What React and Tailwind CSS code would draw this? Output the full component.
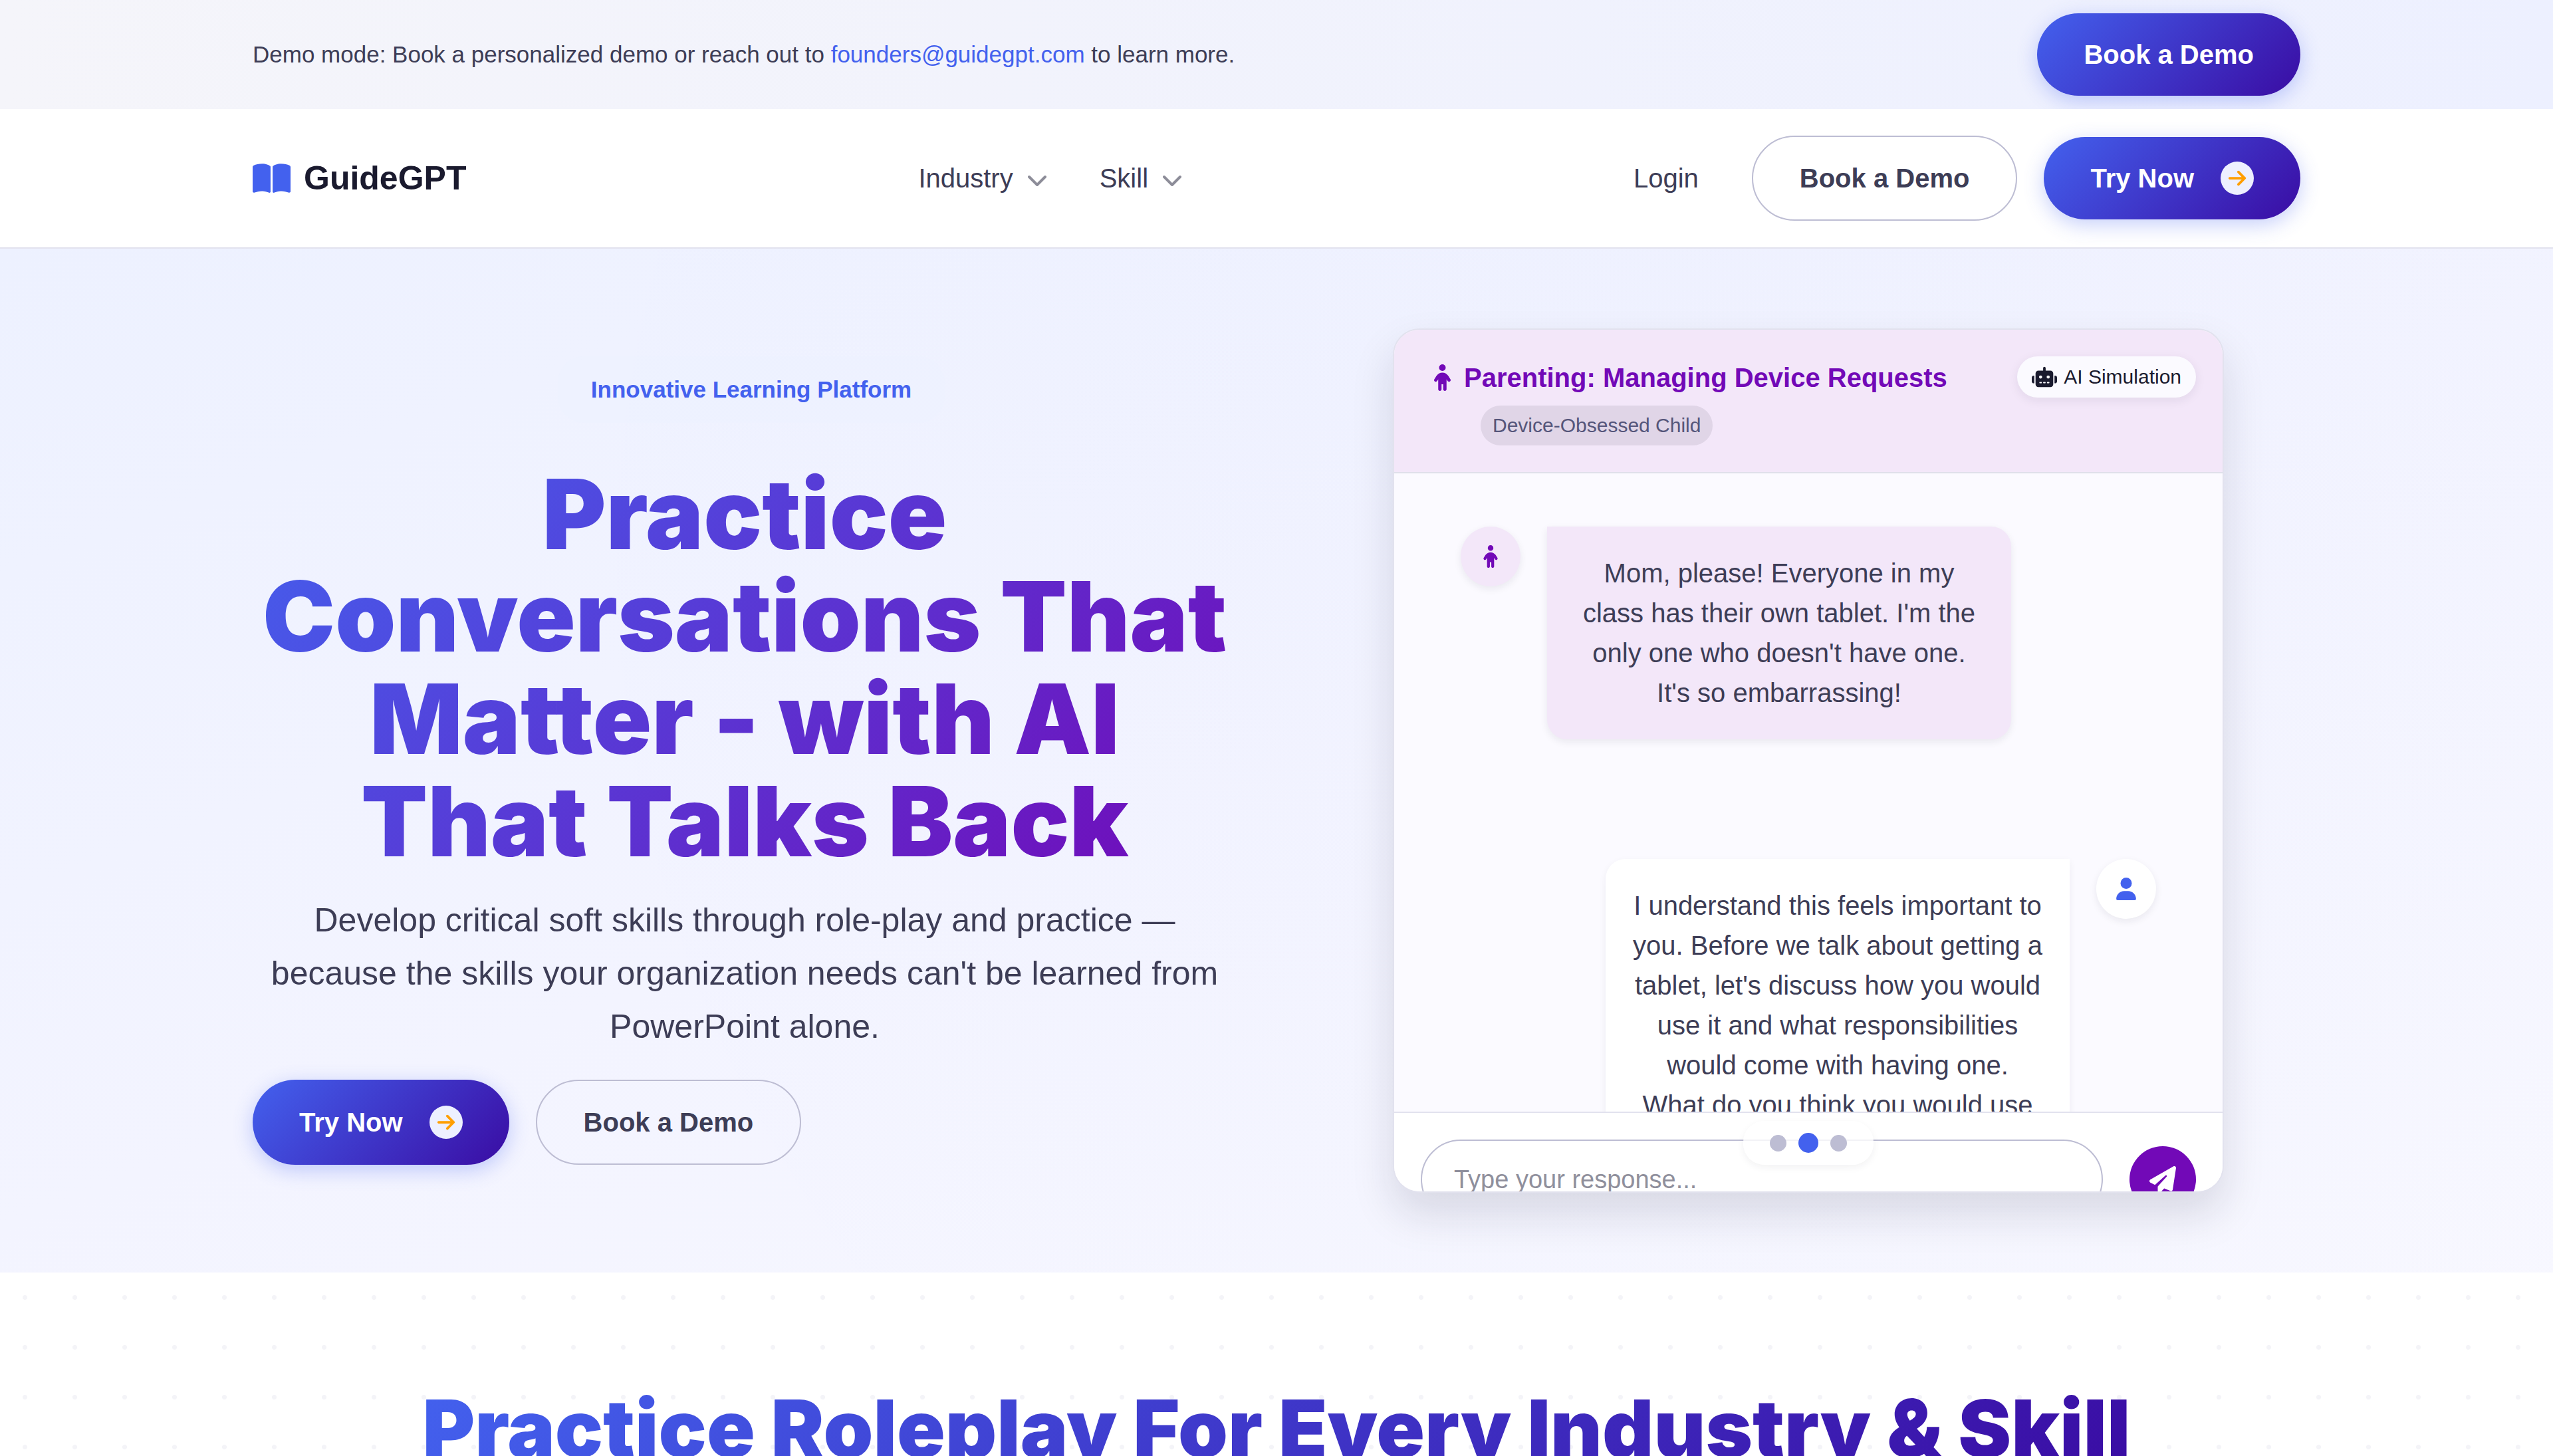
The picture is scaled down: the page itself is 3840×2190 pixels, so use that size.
import { FaBookOpen, FaChild, FaRobot, FaUser, FaPaperPlane, FaArrowRight } from "react-icons/fa6";

const primary =
  "bg-linear-135/srgb from-[#4361ee] to-[#3a0ca3] text-white shadow-[0_8px_30px_rgba(67,97,238,0.3)]";
const pill = "inline-flex items-center rounded-full px-[70px] text-[40px] leading-[60px] font-bold";

function TryNow({ height = "h-[124px]" }) {
  return (
    <button className={`${pill} ${primary} ${height} gap-10`}>
      Try Now
      <span className="flex size-[50px] items-center justify-center rounded-full bg-[#edf0ff] text-[#ff9e00]">
        <FaArrowRight className="size-[30px]" />
      </span>
    </button>
  );
}

function OutlineDemo() {
  return (
    <button className={`${pill} h-32 border-2 border-[#bdbdd3] text-[#3d3d56]`}>Book a Demo</button>
  );
}

function Chevron() {
  return (
    <svg viewBox="0 0 28 18" className="mt-2 h-[18px] w-7" fill="none" stroke="#8d8d99" strokeWidth="4">
      <path d="M2 3 14 15 26 3" strokeLinecap="round" strokeLinejoin="round" />
    </svg>
  );
}

function NavItem({ children }) {
  return (
    <button className="flex items-center gap-[22px] text-[40px] leading-[60px]">
      {children}
      <Chevron />
    </button>
  );
}

function Banner() {
  return (
    <div className="bg-linear-to-r/srgb from-[#f5f5fa] to-[#edf0ff]">
      <div className="mx-auto flex h-[164px] max-w-[3080px] items-center justify-between">
        <p className="text-[35px] leading-[52px]">
          Demo mode: Book a personalized demo or reach out to{" "}
          <a href="mailto:founders@guidegpt.com" className="text-[#4361ee]">founders@guidegpt.com</a> to learn more.
        </p>
        <button className={`${pill} ${primary} h-[124px]`}>Book a Demo</button>
      </div>
    </div>
  );
}

function Header() {
  return (
    <header className="relative border-b-2 border-[#e2e2ee] bg-white">
      <div className="mx-auto flex h-[208px] max-w-[3080px] items-center justify-between">
        <a href="#home" className="flex items-center gap-5 text-[50px] leading-[60px] font-bold text-[#1a1a2e]">
          <FaBookOpen className="size-[57px] text-[#4361ee]" />
          GuideGPT
        </a>
        <nav className="flex gap-20">
          <NavItem>Industry</NavItem>
          <NavItem>Skill</NavItem>
        </nav>
        <div className="flex items-center gap-10">
          <a href="#login" className="mr-10 text-[40px] leading-[60px]">Login</a>
          <OutlineDemo />
          <TryNow />
        </div>
      </div>
    </header>
  );
}

function Chat() {
  return (
    <section className="relative h-[1300px] w-[1250px] overflow-hidden rounded-[40px] border-2 border-[#e2e2ee] bg-[#fbfaff] shadow-[0_32px_64px_rgba(26,26,46,0.13)]">
      <div className="flex h-full flex-col">
        <header className="flex h-[216px] shrink-0 items-start justify-between border-b-2 border-[#e0e0ea] bg-[#f3e7f9] p-10">
          <div className="pl-5">
            <h2 className="flex items-center gap-5 text-[40px] leading-[64px] font-bold text-[#7209b7]">
              <FaChild className="h-10 w-[25px]" />
              Parenting: Managing Device Requests
            </h2>
            <span className="mt-[10px] ml-[70px] inline-block rounded-full bg-[#e0d5e7] px-[18px] text-[30px] leading-[60px] text-[#55557a]">
              Device-Obsessed Child
            </span>
          </div>
          <span className="flex items-center gap-[10px] rounded-full bg-[#fbfaff] px-[22px] text-[30px] leading-[62px] text-[#1a1a2e] shadow-[0_4px_16px_rgba(26,26,46,0.08)]">
            <FaRobot className="size-[38px]" />
            AI Simulation
          </span>
        </header>
        <div className="flex min-h-0 flex-1 flex-col gap-[180px] overflow-hidden px-[100px] pt-20 text-center text-[40px] leading-[60px]">
          <div className="flex items-start gap-10">
            <span className="flex size-[90px] shrink-0 items-center justify-center rounded-full bg-[#f3e7f9] text-[#7209b7] shadow-[0_4px_12px_rgba(26,26,46,0.08)]">
              <FaChild className="size-[34px]" />
            </span>
            <p className="w-[698px] rounded-[30px] rounded-tl-none bg-[#f3e7f9] p-10 shadow-[0_4px_12px_rgba(26,26,46,0.08)]">
              Mom, please! Everyone in my class has their own tablet. I'm the only one who doesn't have one. It's so embarrassing!
            </p>
          </div>
          <div className="flex items-start justify-end gap-10">
            <p className="w-[698px] rounded-[30px] rounded-tr-none bg-white p-10 shadow-[0_4px_12px_rgba(26,26,46,0.06)]">
              I understand this feels important to you. Before we talk about getting a tablet, let's discuss how you would use it and what responsibilities would come with having one. What do you think you would use
            </p>
            <span className="flex size-[90px] shrink-0 items-center justify-center rounded-full bg-white text-[#4361ee] shadow-[0_4px_12px_rgba(26,26,46,0.08)]">
              <FaUser className="size-[34px]" />
            </span>
          </div>
        </div>
        <div className="flex h-[120px] shrink-0 items-start gap-10 border-t-2 border-[#e2e2ee] bg-white px-10 pt-10">
          <input
            aria-label="Your response"
            placeholder="Type your response..."
            className="h-[120px] flex-1 rounded-full border-2 border-[#bdbdd3] bg-white px-12 text-[38px] placeholder:text-[#8f8f9c]"
          />
          <button aria-label="Send" className="mt-[10px] flex size-[100px] items-center justify-center rounded-full bg-[#7209b7] text-white">
            <FaPaperPlane className="size-10" />
          </button>
        </div>
      </div>
      <div className="absolute bottom-10 left-1/2 flex h-[66px] -translate-x-1/2 items-center gap-[18px] rounded-[32px] bg-white/80 px-10 shadow-[0_4px_12px_rgba(26,26,46,0.06)]">
        <button aria-label="Slide 1" className="size-[25px] rounded-full bg-[#bdbdd3]" />
        <button aria-label="Slide 2" className="size-[30px] rounded-full bg-[#4361ee]" />
        <button aria-label="Slide 3" className="size-[25px] rounded-full bg-[#bdbdd3]" />
      </div>
    </section>
  );
}

function Hero() {
  return (
    <main className="bg-[radial-gradient(circle_at_70%_30%,rgba(67,97,238,0.015),transparent_70%),linear-gradient(160deg,#edf1ff,#f3f4ff_50%,#f8f8ff)]">
      <div className="mx-auto grid max-w-[3080px] grid-cols-2 items-center gap-[120px] py-[120px]">
        <div>
          <div className="text-center">
            <p className="ml-5 inline-block rounded-[40px] bg-[#edf1ff]/60 px-[50px] py-6 text-[35px] leading-[52px] font-bold text-[#4361ee]">
              Innovative Learning Platform
            </p>
            <h1 className="mt-[60px] bg-linear-135/srgb from-[#4361ee] to-[#7209b7] bg-clip-text font-['Inter',sans-serif] text-[146px] leading-[154px] font-black text-transparent">
              Practice Conversations That Matter - with AI That Talks Back
            </h1>
            <p className="mt-8 text-[50px] leading-[80px]">
              Develop critical soft skills through role-play and practice — because the skills your organization needs can't be learned from PowerPoint alone.
            </p>
          </div>
          <div className="mt-10 flex gap-10">
            <TryNow height="h-32" />
            <OutlineDemo />
          </div>
        </div>
        <div className="flex justify-center">
          <Chat />
        </div>
      </div>
    </main>
  );
}

export default function App() {
  return (
    <div className="min-h-screen bg-white font-['Liberation_Sans',Arial,sans-serif] text-[#3d3d56]">
      <Banner />
      <Header />
      <Hero />
      <section className="bg-[radial-gradient(#f4f4f8_3px,transparent_4px)] bg-[size:75px_75px] pt-40 text-center">
        <h2 className="inline-block bg-linear-135/srgb from-[#4361ee] to-[#3a0ca3] bg-clip-text font-['Inter',sans-serif] text-[120px] leading-[150px] font-black text-transparent">
          Practice Roleplay For Every Industry &amp; Skill
        </h2>
      </section>
    </div>
  );
}
